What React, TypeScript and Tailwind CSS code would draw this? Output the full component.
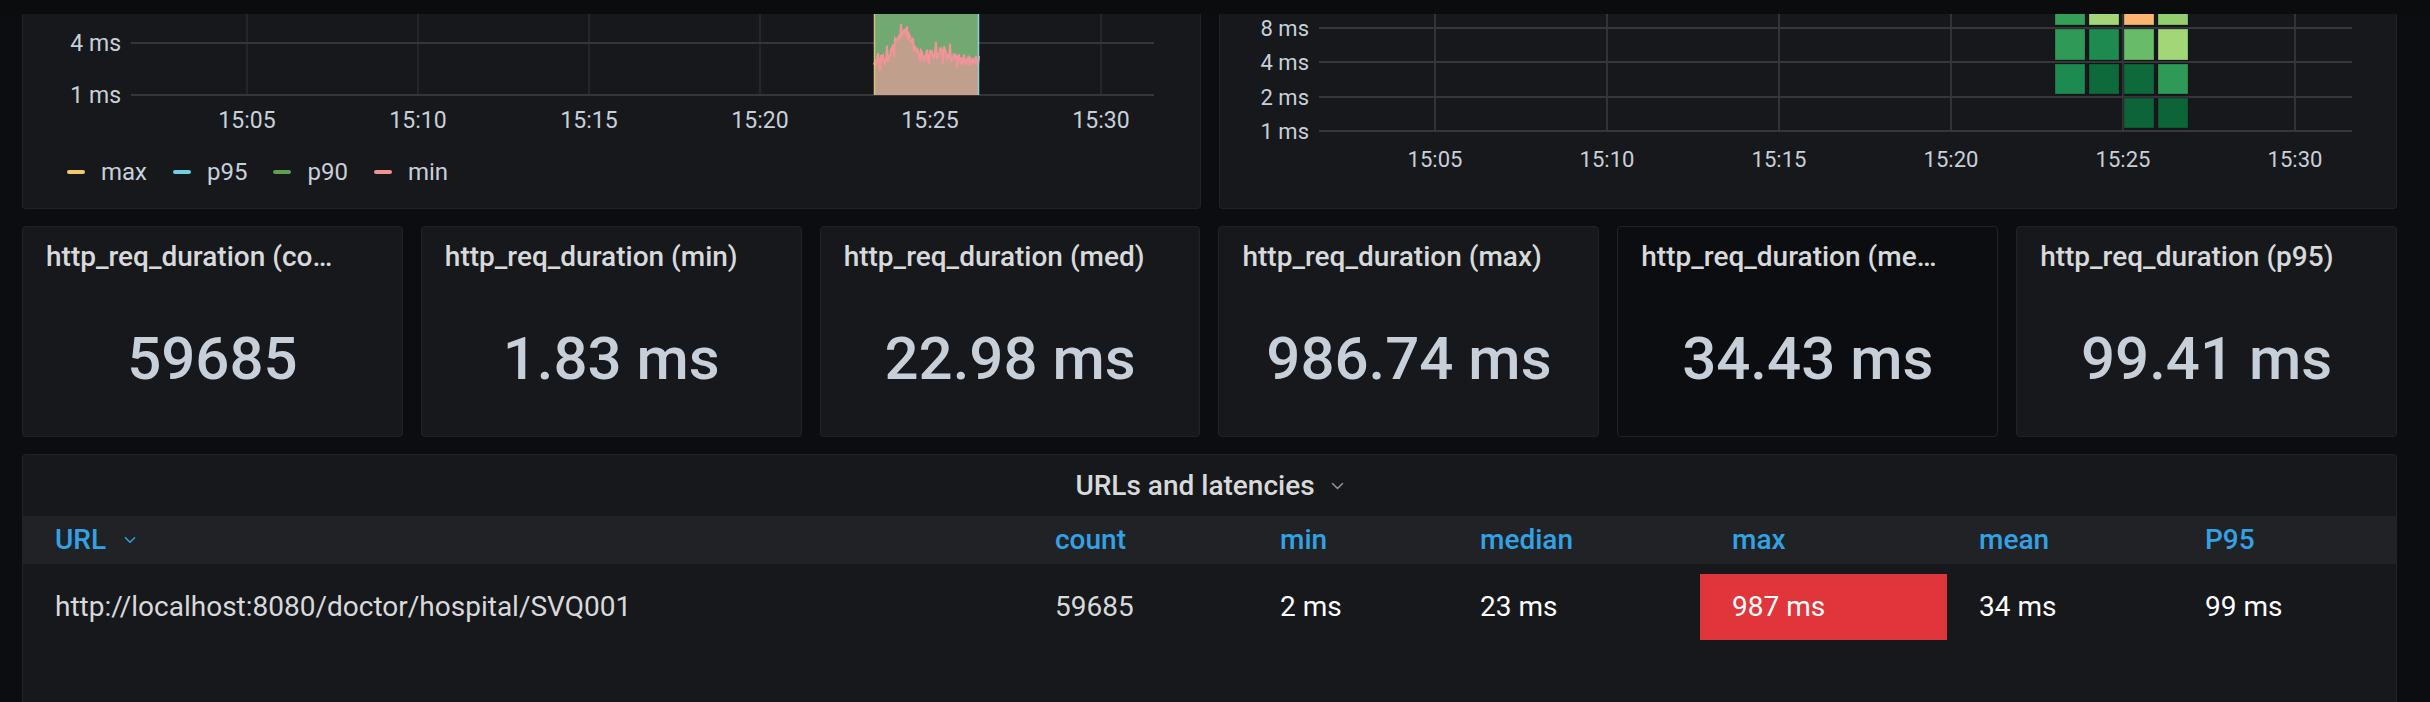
import React from "react";

const stats = [
  { title: "http_req_duration (count)", value: "59685", dark: false },
  { title: "http_req_duration (min)", value: "1.83 ms", dark: false },
  { title: "http_req_duration (med)", value: "22.98 ms", dark: false },
  { title: "http_req_duration (max)", value: "986.74 ms", dark: false },
  { title: "http_req_duration (mean)", value: "34.43 ms", dark: true },
  { title: "http_req_duration (p95)", value: "99.41 ms", dark: false },
];

function GraphPanel() {
  const vx = [224, 395, 566, 737, 907, 1078];
  const labels = ["15:05", "15:10", "15:15", "15:20", "15:25", "15:30"];
  const pts: [number, number][] = [];
  for (let i = 0; i <= 105; i++) {
    const env =
      47 -
      30 * Math.exp(-(((i - 30) / 12) ** 2)) -
      9 * Math.exp(-(((i - 66) / 14) ** 2));
    const n =
      6 * Math.sin(i * 2.3) * Math.cos(i * 0.9 + 0.3) +
      4 * Math.sin(i * 4.1 + 1.2) +
      3 * Math.sin(i * 1.3);
    const y = Math.max(7, Math.min(70, env + n));
    pts.push([851 + i, y]);
  }
  const line = pts.map((p, i) => `${i ? "L" : "M"}${p[0]},${p[1].toFixed(1)}`).join(" ");
  const area = `${line} L956,81 L851,81 Z`;
  const legend = [
    { c: "bg-[#f2c96d]", t: "max" },
    { c: "bg-[#6ed0e0]", t: "p95" },
    { c: "bg-[#629e51]", t: "p90" },
    { c: "bg-[#f29191]", t: "min" },
  ];
  return (
    <div className="flex-1 flex flex-col bg-[#17181c] border-x border-b border-[#202226] rounded-b-[4px] overflow-hidden">
      <svg width="1179" height="135" className="block shrink-0">
        {vx.map((x) => (
          <line key={x} x1={x} x2={x} y1={0} y2={81} stroke="#2e2f33" strokeWidth={1.2} />
        ))}
        <line x1={108} x2={1131} y1={29} y2={29} stroke="#35363a" strokeWidth={2} />
        <line x1={108} x2={1131} y1={81} y2={81} stroke="#35363a" strokeWidth={2} />
        <rect x={851} y={0} width={105} height={81} fill="#72a872" />
        <path d={area} fill="#c09f8c" />
        <path d={line} fill="none" stroke="#f2939a" strokeWidth={2} />
        <line x1={851.5} x2={851.5} y1={0} y2={81} stroke="#d8c27a" strokeWidth={1.5} />
        <line x1={955.5} x2={955.5} y1={0} y2={81} stroke="#8fd0d8" strokeWidth={1.5} />
        <text x={98} y={29} textAnchor="end" dominantBaseline="central" fill="#c7d0d9" fontSize={23}>4 ms</text>
        <text x={98} y={81} textAnchor="end" dominantBaseline="central" fill="#c7d0d9" fontSize={23}>1 ms</text>
        {vx.map((x, i) => (
          <text key={i} x={x} y={106} textAnchor="middle" dominantBaseline="central" fill="#c7d0d9" fontSize={23}>
            {labels[i]}
          </text>
        ))}
      </svg>
      <div className="flex items-center h-[46px] pl-[44px] text-[24px] text-[#c7d0d9]">
        {legend.map((l) => (
          <div key={l.t} className="flex items-center mr-[26px]">
            <span className={`w-[18px] h-[4px] rounded-[2px] mr-[16px] ${l.c}`} />
            <span>{l.t}</span>
          </div>
        ))}
      </div>
    </div>
  );
}

function HeatmapPanel() {
  const vx = [215, 387, 559, 731, 903, 1075];
  const labels = ["15:05", "15:10", "15:15", "15:20", "15:25", "15:30"];
  const hy = [14, 48, 83, 117];
  const ylab = ["8 ms", "4 ms", "2 ms", "1 ms"];
  const cols = [835, 869, 904, 938];
  const rows = [
    { y: -4, h: 15 },
    { y: 15, h: 31 },
    { y: 50, h: 30 },
    { y: 84, h: 30 },
  ];
  const colors: (string | null)[][] = [
    ["#33a05a", "#a2d677", "#fdb46f", "#93cf6e"],
    ["#2f9a58", "#1d8a4f", "#68bb68", "#a3d676"],
    ["#1d8a4f", "#0f6a3b", "#0f6a3b", "#2f9a58"],
    [null, null, "#0c6438", "#0c6438"],
  ];
  return (
    <div className="flex-1 bg-[#17181c] border-x border-b border-[#202226] rounded-b-[4px] overflow-hidden">
      <svg width="1178" height="190" className="block">
        {vx.map((x) => (
          <line key={x} x1={x} x2={x} y1={0} y2={117} stroke="#3a3b3f" strokeWidth={1.6} />
        ))}
        {hy.map((y) => (
          <line key={y} x1={99} x2={1132} y1={y} y2={y} stroke="#36373b" strokeWidth={2} />
        ))}
        {rows.map((r, ri) =>
          cols.map((x, ci) => {
            const c = colors[ri][ci];
            if (!c) return null;
            return (
              <rect key={`${ri}-${ci}`} x={x} y={r.y} width={30} height={r.h} fill={c} stroke="#000" strokeOpacity={0.25} strokeWidth={1} />
            );
          })
        )}
        {hy.map((y, i) => (
          <text key={i} x={89} y={y} textAnchor="end" dominantBaseline="central" fill="#c7d0d9" fontSize={22}>
            {ylab[i]}
          </text>
        ))}
        {vx.map((x, i) => (
          <text key={i} x={x} y={145} textAnchor="middle" dominantBaseline="central" fill="#c7d0d9" fontSize={22}>
            {labels[i]}
          </text>
        ))}
      </svg>
    </div>
  );
}

function StatPanel({ title, value, dark }: { title: string; value: string; dark: boolean }) {
  return (
    <div
      className={`flex-1 min-w-0 flex flex-col rounded-[4px] border ${
        dark ? "bg-[#0c0d10] border-[#222327]" : "bg-[#17181c] border-[#202226]"
      }`}
    >
      <div className="h-[60px] flex items-center pl-[23px]">
        <span className="block max-w-[301px] truncate text-[28px] font-medium text-[#d8d9da] leading-[36px]">
          {title}
        </span>
      </div>
      <div className="flex-1 flex items-center justify-center pb-[5px]">
        <span className="text-[60px] font-medium text-[#c7d0d9] leading-none">{value}</span>
      </div>
    </div>
  );
}

function Chevron({ color, w = 13 }: { color: string; w?: number }) {
  return (
    <svg width={w} height={8} viewBox="0 0 13 8" className="block">
      <polyline points="1.5,1.5 6.5,6.5 11.5,1.5" fill="none" stroke={color} strokeWidth={1.6} strokeLinecap="round" strokeLinejoin="round" />
    </svg>
  );
}

function TablePanel() {
  const cols = [
    { h: "URL", v: "http://localhost:8080/doctor/hospital/SVQ001", w: "w-[1000px]", white: false },
    { h: "count", v: "59685", w: "w-[225px]", white: false },
    { h: "min", v: "2 ms", w: "w-[200px]", white: true },
    { h: "median", v: "23 ms", w: "w-[252px]", white: true },
    { h: "max", v: "987 ms", w: "w-[247px]", white: true },
    { h: "mean", v: "34 ms", w: "w-[226px]", white: true },
    { h: "P95", v: "99 ms", w: "flex-1", white: true },
  ];
  return (
    <div className="h-[280px] bg-[#17181c] border border-[#202226] rounded-[4px] overflow-hidden">
      <div className="h-[61px] flex items-center justify-center gap-[16px]">
        <span className="text-[28px] font-medium text-[#d8d9da] leading-none">URLs and latencies</span>
        <Chevron color="#8e8f93" />
      </div>
      <div className="flex h-[48px] bg-[#202226]">
        {cols.map((c) => (
          <div key={c.h} className={`${c.w} shrink-0 flex items-center pl-[32px] gap-[18px]`}>
            <span className="text-[28px] font-medium text-[#33a2e5] leading-none">{c.h}</span>
            {c.h === "URL" && <Chevron color="#33a2e5" w={12} />}
          </div>
        ))}
      </div>
      <div className="flex h-[66px] mt-[10px]">
        {cols.map((c) => (
          <div
            key={c.h}
            className={`${c.w} shrink-0 flex items-center pl-[32px] ${c.h === "max" ? "bg-[#e0353b]" : ""}`}
          >
            <span className={`text-[28px] leading-none ${c.white ? "text-[#ffffff]" : "text-[#d8d9da]"}`}>{c.v}</span>
          </div>
        ))}
      </div>
    </div>
  );
}

export default function App() {
  return (
    <div className="w-[2430px] h-[702px] overflow-hidden bg-[#0c0d10] font-['Roboto','Liberation_Sans',sans-serif] text-[#c7d0d9]">
      <div className="h-[14px] bg-[#0b0c0e]" />
      <div className="pl-[22px] pr-[33px] flex flex-col gap-[17px]">
        <div className="flex gap-[18px] h-[195px]">
          <GraphPanel />
          <HeatmapPanel />
        </div>
        <div className="flex gap-[18px] h-[211px]">
          {stats.map((s) => (
            <StatPanel key={s.title} {...s} />
          ))}
        </div>
        <TablePanel />
      </div>
    </div>
  );
}
